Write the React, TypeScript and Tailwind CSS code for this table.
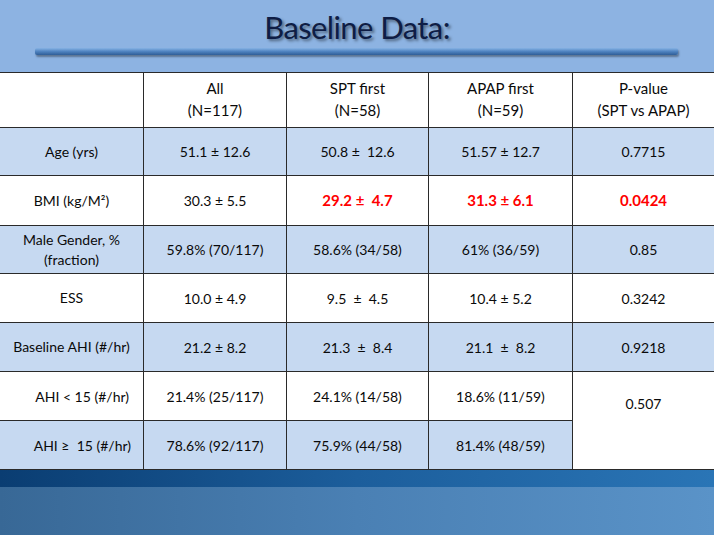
const rows = [
  { label: 'Age (yrs)', all: '51.1 ± 12.6', spt: '50.8 ±  12.6', apap: '51.57 ± 12.7', p: '0.7715', blue: true, h: 'h-[47px]' },
  { label: 'BMI (kg/M²)', all: '30.3 ± 5.5', spt: '29.2 ±  4.7', apap: '31.3 ± 6.1', p: '0.0424', blue: false, red: true, h: 'h-[49px]' },
  { label: 'Male Gender, %\n(fraction)', all: '59.8% (70/117)', spt: '58.6% (34/58)', apap: '61% (36/59)', p: '0.85', blue: true, h: 'h-[47px]' },
  { label: 'ESS', all: '10.0 ± 4.9', spt: '9.5  ±  4.5', apap: '10.4 ± 5.2', p: '0.3242', blue: false, h: 'h-[48px]' },
  { label: 'Baseline AHI (#/hr)', all: '21.2 ± 8.2', spt: '21.3  ±  8.4', apap: '21.1  ±  8.2', p: '0.9218', blue: true, h: 'h-[48px]' },
];

const cell = 'flex items-center justify-center text-center whitespace-pre';

export default function App() {
  return (
    <div className="w-[714px] h-[535px] overflow-hidden bg-white font-['Lato',sans-serif] text-[14px] text-[#0a0a0a]">
      <div className="h-[72px] bg-[#8db3e2] flex flex-col items-center">
        <h1 className="mt-[10px] text-[31px] leading-[35px] tracking-[-0.6px] text-[#0e1d45] [text-shadow:2px_2px_3px_rgba(0,0,0,0.45)]">
          Baseline Data:
        </h1>
        <div className="mt-[3px] ml-[-1px] w-[643px] h-[7px] rounded-[2px] bg-gradient-to-b from-[#86b2e4] via-[#4f83c0] to-[#2f5e98] shadow-[1px_2px_2px_rgba(0,0,0,0.35)]" />
      </div>

      <div className="grid grid-cols-[143px_142px_141px_143px_141px] gap-px bg-[#2a2a2a] border-y border-[#2a2a2a]">
        <div className="h-[54px] bg-white" />
        <div className={`${cell} bg-white text-[15px] leading-[22px] pb-[3px]`}>{'All\n(N=117)'}</div>
        <div className={`${cell} bg-white text-[15px] leading-[22px] pb-[3px]`}>{'SPT first\n(N=58)'}</div>
        <div className={`${cell} bg-white text-[15px] leading-[22px] pb-[3px]`}>{'APAP first\n(N=59)'}</div>
        <div className={`${cell} bg-white text-[15px] leading-[22px] pb-[3px]`}>{'P-value\n(SPT vs APAP)'}</div>

        {rows.map((r) => {
          const bg = r.blue ? 'bg-[#c6d9f1]' : 'bg-white';
          const hl = r.red ? 'text-[#ff0000] font-bold text-[15px]' : '';
          return [
            <div key={r.label + 'l'} className={`${cell} ${bg} ${r.h} leading-[20px]`}>{r.label}</div>,
            <div key={r.label + 'a'} className={`${cell} ${bg}`}>{r.all}</div>,
            <div key={r.label + 's'} className={`${cell} ${bg} ${hl}`}>{r.spt}</div>,
            <div key={r.label + 'p'} className={`${cell} ${bg} ${hl}`}>{r.apap}</div>,
            <div key={r.label + 'v'} className={`${cell} ${bg} ${hl}`}>{r.p}</div>,
          ];
        })}

        <div className="h-[48px] bg-white flex items-center justify-end pr-[14px]">AHI &lt; 15 (#/hr)</div>
        <div className={`${cell} bg-white`}>21.4% (25/117)</div>
        <div className={`${cell} bg-white`}>24.1% (14/58)</div>
        <div className={`${cell} bg-white`}>18.6% (11/59)</div>
        <div className="row-span-2 bg-white flex justify-center pt-[21px]">0.507</div>

        <div className="h-[48px] bg-[#c6d9f1] flex items-center justify-end pr-[12px] whitespace-pre">AHI ≥  15 (#/hr)</div>
        <div className={`${cell} bg-[#c6d9f1]`}>78.6% (92/117)</div>
        <div className={`${cell} bg-[#c6d9f1]`}>75.9% (44/58)</div>
        <div className={`${cell} bg-[#c6d9f1]`}>81.4% (48/59)</div>
      </div>

      <div className="h-[17px] bg-gradient-to-r from-[#0a3d72] via-[#1c5e9c] to-[#2a75b6]" />
      <div className="h-[60px] bg-gradient-to-r from-[#386896] via-[#4a80b4] to-[#5a93c8]" />
    </div>
  );
}
